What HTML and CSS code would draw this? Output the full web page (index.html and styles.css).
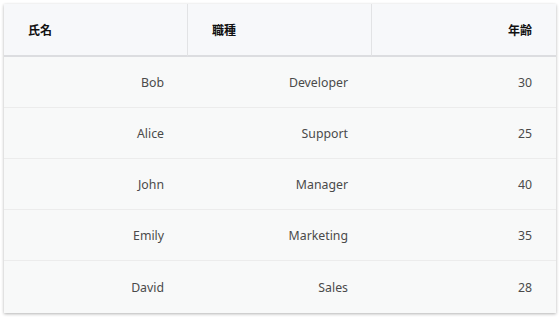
FILE: index.html
```html
<!DOCTYPE html>
<html lang="ja">
<head>
<meta charset="utf-8">
<link rel="stylesheet" href="styles.css">
</head>
<body>
<table class="data-table">
  <thead>
    <tr>
      <th class="col-left">氏名</th>
      <th class="col-left">職種</th>
      <th class="col-right">年齢</th>
    </tr>
  </thead>
  <tbody>
    <tr><td>Bob</td><td>Developer</td><td>30</td></tr>
    <tr><td>Alice</td><td>Support</td><td>25</td></tr>
    <tr><td>John</td><td>Manager</td><td>40</td></tr>
    <tr><td>Emily</td><td>Marketing</td><td>35</td></tr>
    <tr><td>David</td><td>Sales</td><td>28</td></tr>
  </tbody>
</table>
</body>
</html>
```
FILE: styles.css
```css
html, body {
  margin: 0;
  padding: 0;
  background: #ffffff;
}
body {
  padding: 4px;
  font-family: "Noto Sans", "Noto Sans CJK JP", sans-serif;
}
.data-table {
  width: 552px;
  border-collapse: separate;
  border-spacing: 0;
  table-layout: fixed;
  background: #f8f9f9;
  box-shadow: 0 1px 3px rgba(0,0,0,0.3);
}
.data-table th {
  height: 53px;
  padding: 0 24px;
  font-family: "Noto Sans CJK JP", sans-serif;
  font-size: 12px;
  font-weight: 700;
  color: #111;
  background: #f7f8fa;
  border-bottom: 2px solid #dcdde0;
  border-right: 1px solid #e2e3e5;
  box-sizing: border-box;
}
.data-table th:last-child {
  border-right: none;
}
.col-left { text-align: left; }
.col-right { text-align: right; }
.data-table td {
  height: 51px;
  padding: 0 24px;
  text-align: right;
  font-size: 12.3px;
  color: #4a4a4a;
  border-bottom: 1px solid #ececec;
  box-sizing: border-box;
}
.data-table tbody tr:last-child td {
  border-bottom: none;
  height: 52px;
}
```
